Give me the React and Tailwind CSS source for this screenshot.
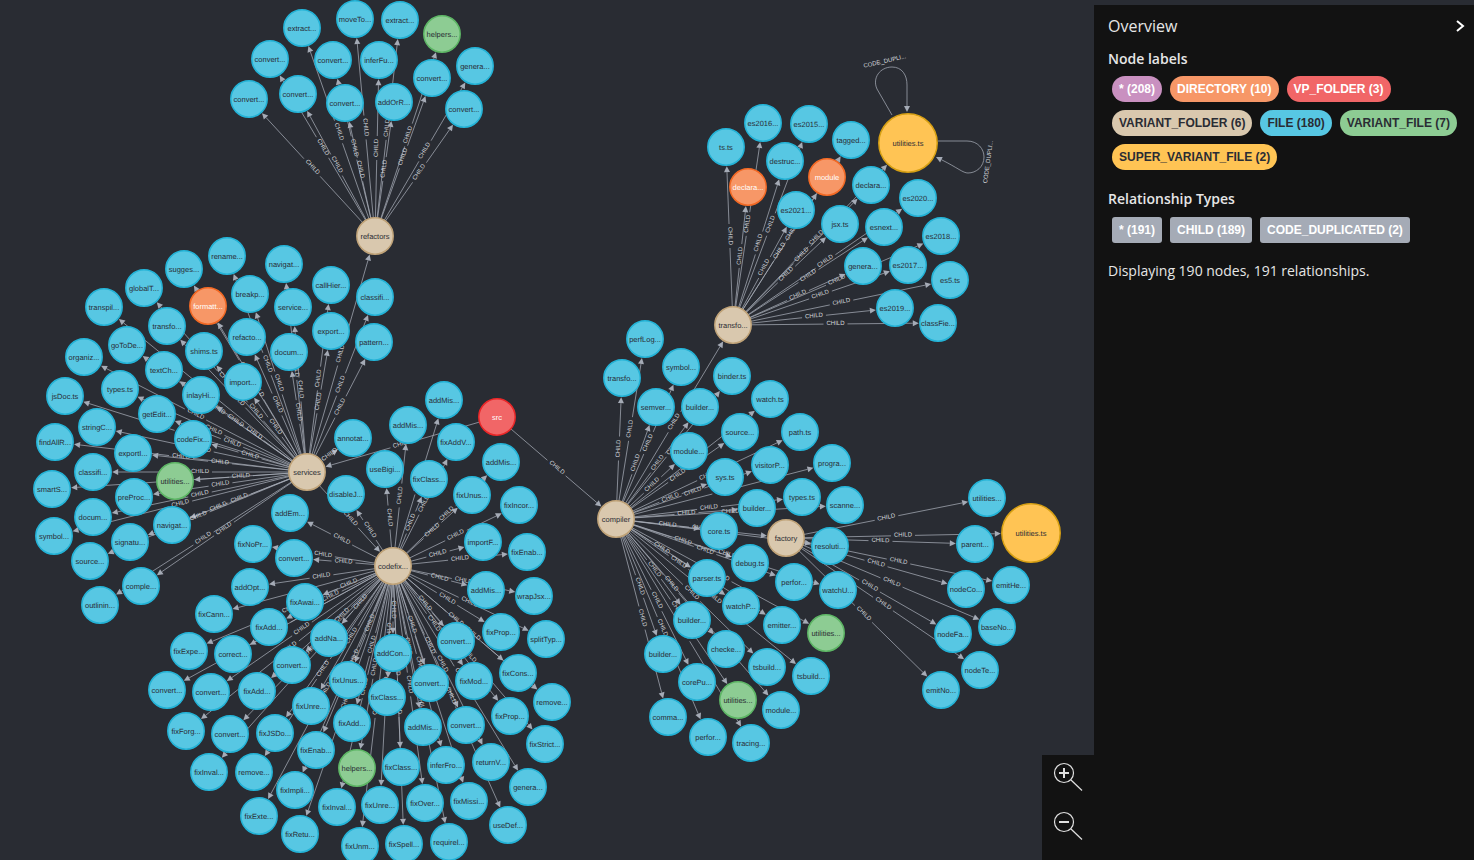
import React from 'react';

const KINDS = {
    file: { circle: 'fill-[#57c7e3] stroke-[#23b3d7]', text: 'fill-[#2a2c34]', r: 18.2 },
    variant: { circle: 'fill-[#8dcc93] stroke-[#5db665]', text: 'fill-[#2a2c34]', r: 18.2 },
    folder: { circle: 'fill-[#d9c8ae] stroke-[#c0a378]', text: 'fill-[#2a2c34]', r: 18.2 },
    dir: { circle: 'fill-[#f79767] stroke-[#f36924]', text: 'fill-white', r: 18.2 },
    vp: { circle: 'fill-[#f16667] stroke-[#eb2728]', text: 'fill-white', r: 18.2 },
    super: { circle: 'fill-[#ffc454] stroke-[#d7a013]', text: 'fill-[#2a2c34]', r: 29.2 },
};

const HUBS = {
    src: ['src', 497, 417, 'vp'],
    services: ['services', 307, 472, 'folder'],
    refactors: ['refactors', 375, 236, 'folder'],
    codefix: ['codefix...', 393, 566, 'folder'],
    compiler: ['compiler', 616, 519, 'folder'],
    transfo: ['transfo...', 733, 325, 'folder'],
    factory: ['factory', 786, 538, 'folder'],
};

const HUB_EDGES = [
    ['src', 'services'],
    ['src', 'compiler'],
    ['services', 'refactors'],
    ['services', 'codefix'],
    ['compiler', 'transfo'],
    ['compiler', 'factory'],
];

const CHILDREN = {
    refactors: [
        ['extract...', 302, 28], ['moveTo...', 355, 19], ['extract...', 400, 20], ['helpers...', 442, 34, 'variant'],
        ['convert...', 270, 59], ['convert...', 333, 60], ['inferFu...', 379, 60], ['genera...', 475, 66],
        ['convert...', 432, 78], ['convert...', 249, 99], ['convert...', 298, 94], ['convert...', 345, 103],
        ['addOrR...', 394, 102], ['convert...', 464, 109],
    ],
    services: [
        ['rename...', 227, 256], ['sugges...', 184, 269], ['navigat...', 284, 264], ['globalT...', 144, 288],
        ['callHier...', 331, 285], ['classifi...', 375, 297], ['breakp...', 250, 294], ['transpil...', 104, 307],
        ['formatt...', 208, 306, 'dir'], ['service...', 293, 307], ['transfo...', 167, 326], ['export...', 331, 331],
        ['pattern...', 374, 342], ['refacto...', 247, 337], ['goToDe...', 127, 345], ['docum...', 289, 352],
        ['shims.ts', 204, 351], ['organiz...', 84, 357], ['textCh...', 164, 370], ['import...', 243, 382],
        ['types.ts', 120, 389], ['jsDoc.ts', 65, 396], ['inlayHi...', 201, 395], ['getEdit...', 157, 414],
        ['stringC...', 97, 427], ['codeFix...', 193, 439], ['findAllR...', 55, 442], ['exportI...', 133, 453],
        ['classifi...', 93, 472], ['utilities...', 175, 481, 'variant'], ['smartS...', 52, 489], ['preProc...', 134, 497],
        ['docum...', 93, 517], ['navigat...', 172, 525], ['signatu...', 130, 542], ['symbol...', 54, 536],
        ['source...', 90, 561], ['comple...', 141, 586], ['outlinin...', 100, 605], ['annotat...', 353, 438],
    ],
    codefix: [
        ['disableJ...', 346, 494], ['addEm...', 290, 513], ['addMis...', 444, 400], ['addMis...', 408, 425],
        ['fixAddV...', 456, 442], ['useBigi...', 385, 469], ['fixClass...', 429, 479], ['addMis...', 501, 462],
        ['fixUnus...', 472, 495], ['fixIncor...', 519, 505], ['fixNoPr...', 253, 544], ['convert...', 294, 558],
        ['importF...', 483, 542], ['fixEnab...', 527, 552], ['addOpt...', 250, 587], ['fixAwai...', 305, 602],
        ['addMis...', 486, 590], ['wrapJsx...', 534, 596], ['fixCann...', 214, 614], ['fixAdd...', 269, 627],
        ['fixProp...', 501, 632], ['splitTyp...', 546, 639], ['addNa...', 329, 638], ['addCon...', 393, 653],
        ['convert...', 456, 641], ['correct...', 233, 654], ['fixExpe...', 189, 651], ['convert...', 292, 665],
        ['fixCons...', 518, 673], ['convert...', 167, 690], ['convert...', 211, 692], ['fixUnus...', 348, 680],
        ['fixMod...', 474, 681], ['convert...', 430, 683], ['remove...', 552, 702], ['fixAdd...', 257, 691],
        ['fixClass...', 387, 697], ['fixUnre...', 311, 706], ['fixProp...', 510, 716], ['fixForg...', 186, 731],
        ['convert...', 230, 734], ['fixJSDo...', 275, 733], ['fixAdd...', 352, 723], ['convert...', 466, 725],
        ['addMis...', 423, 727], ['fixStrict...', 545, 744], ['fixEnab...', 316, 750], ['returnV...', 491, 762],
        ['inferFro...', 446, 765], ['fixClass...', 401, 767], ['helpers...', 357, 768, 'variant'], ['fixInval...', 209, 772],
        ['remove...', 254, 772], ['genera...', 528, 787], ['fixImpli...', 295, 790], ['fixMissi...', 469, 801],
        ['fixOver...', 425, 803], ['fixInval...', 337, 807], ['fixUnre...', 380, 805], ['fixExte...', 259, 816],
        ['useDef...', 508, 825], ['fixRetu...', 300, 834], ['fixUnm...', 360, 846], ['fixSpell...', 404, 844],
        ['requirel...', 449, 842],
    ],
    compiler: [
        ['perfLog...', 645, 339], ['symbol...', 681, 367], ['transfo...', 622, 378], ['binder.ts', 732, 376],
        ['watch.ts', 770, 399], ['semver...', 656, 407], ['builder...', 700, 407], ['source...', 740, 432],
        ['path.ts', 800, 432], ['module...', 689, 451], ['progra...', 832, 463], ['visitorP...', 770, 465],
        ['sys.ts', 725, 477], ['types.ts', 802, 497], ['scanne...', 845, 505], ['builder...', 757, 508],
        ['core.ts', 719, 531], ['debug.ts', 750, 563], ['resoluti...', 830, 546], ['parser.ts', 707, 578],
        ['perfor...', 794, 582], ['watchU...', 838, 590], ['watchP...', 741, 606], ['emitter...', 782, 625],
        ['utilities...', 826, 633, 'variant'], ['builder...', 692, 620], ['checke...', 726, 649], ['builder...', 663, 654],
        ['tsbuild...', 767, 667], ['tsbuild...', 811, 676], ['corePu...', 697, 682], ['utilities...', 738, 700, 'variant'],
        ['module...', 781, 710], ['comma...', 668, 717], ['perfor...', 708, 737], ['tracing...', 751, 743],
    ],
    factory: [
        ['utilities...', 987, 498], ['utilities.ts', 1031, 533, 'super'], ['parent...', 975, 544], ['nodeCo...', 966, 589],
        ['emitHe...', 1011, 585], ['nodeFa...', 953, 634], ['baseNo...', 997, 627], ['nodeTe...', 980, 670],
        ['emitNo...', 941, 690],
    ],
    transfo: [
        ['ts.ts', 726, 147], ['es2016...', 763, 123], ['es2015...', 809, 124], ['tagged...', 851, 140],
        ['utilities.ts', 908, 143, 'super'], ['destruc...', 785, 161], ['declara...', 748, 187, 'dir'], ['module', 827, 177, 'dir'],
        ['declara...', 871, 185], ['es2020...', 918, 198], ['es2021...', 796, 210], ['jsx.ts', 840, 224],
        ['esnext...', 884, 227], ['es2018...', 941, 236], ['genera...', 863, 266], ['es2017...', 908, 265],
        ['es5.ts', 950, 280], ['es2019...', 895, 308], ['classFie...', 938, 323],
    ],
};

const LABELS = [
    [
        ['* (208)', 'bg-[#c990c0] text-white'],
        ['DIRECTORY (10)', 'bg-[#f79767] text-white'],
        ['VP_FOLDER (3)', 'bg-[#f16667] text-white'],
    ],
    [
        ['VARIANT_FOLDER (6)', 'bg-[#d9c8ae] text-[#2a2c34]'],
        ['FILE (180)', 'bg-[#57c7e3] text-[#2a2c34]'],
        ['VARIANT_FILE (7)', 'bg-[#8dcc93] text-[#2a2c34]'],
    ],
    [['SUPER_VARIANT_FILE (2)', 'bg-[#ffc454] text-[#2a2c34]']],
];

const RELS = ['* (191)', 'CHILD (189)', 'CODE_DUPLICATED (2)'];

const radius = (n) => KINDS[n[3] || 'file'].r;

function Edge({ from, to }) {
    const dx = to[1] - from[1];
    const dy = to[2] - from[2];
    const len = Math.hypot(dx, dy);
    const ux = dx / len;
    const uy = dy / len;
    const at = (d) => [from[1] + ux * d, from[2] + uy * d];

    const start = at(radius(from));
    const tip = at(len - radius(to) - 1);
    const base = at(len - radius(to) - 7);
    const mid = (radius(from) + len - radius(to)) / 2;
    const gapA = at(mid - 12);
    const gapB = at(mid + 12);
    const c = at(mid);

    let angle = (Math.atan2(dy, dx) * 180) / Math.PI;
    if (angle > 90) angle -= 180;
    if (angle <= -90) angle += 180;

    return (
        <g>
            <line x1={start[0]} y1={start[1]} x2={gapA[0]} y2={gapA[1]} className="stroke-[#a5abb6] stroke-[0.75]" />
            <line x1={gapB[0]} y1={gapB[1]} x2={base[0]} y2={base[1]} className="stroke-[#a5abb6] stroke-[0.75]" />
            <polygon
                points={`${tip[0]},${tip[1]} ${base[0] - uy * 3},${base[1] + ux * 3} ${base[0] + uy * 3},${base[1] - ux * 3}`}
                className="fill-[#a5abb6]"
            />
            <text
                x={c[0]}
                y={c[1]}
                transform={`rotate(${angle} ${c[0]} ${c[1]})`}
                textAnchor="middle"
                dominantBaseline="central"
                className="fill-[#d5d8dd] text-[6px]"
            >
                CHILD
            </text>
        </g>
    );
}

function Node({ node }) {
    const [label, x, y, kind = 'file'] = node;
    const style = KINDS[kind];
    return (
        <g>
            <circle cx={x} cy={y} r={style.r} className={`${style.circle} stroke-[1.5]`} />
            <text x={x} y={y} textAnchor="middle" dominantBaseline="central" className={`${style.text} text-[7.5px]`}>
                {label}
            </text>
        </g>
    );
}

function Graph() {
    const groups = Object.entries(CHILDREN);
    return (
        <svg width="1094" height="860" className="block font-['Liberation_Sans',sans-serif] [text-rendering:geometricPrecision]">
            {HUB_EDGES.map(([a, b]) => (
                <Edge key={a + b} from={HUBS[a]} to={HUBS[b]} />
            ))}
            {groups.map(([hub, kids]) =>
                kids.map((kid) => <Edge key={hub + kid[1] + kid[2]} from={HUBS[hub]} to={kid} />)
            )}

            {/* self loops on the big utilities.ts */}
            <path
                d="M892 115 L877 89 C872 78 880 67 892 67 C902 67 907 75 907 85 L907 106"
                className="fill-none stroke-[#a5abb6] stroke-[0.75]"
            />
            <polygon points="907,112 904,106 910,106" className="fill-[#a5abb6]" />
            <text x="885" y="62" transform="rotate(-13 885 62)" textAnchor="middle" dominantBaseline="central" className="fill-[#d5d8dd] text-[6px]">
                CODE_DUPLI...
            </text>
            <path
                d="M938 141 L967 141 C978 141 984 149 984 157 C984 167 976 173 968 173 C963 173 958 168 941.4 159.7"
                className="fill-none stroke-[#a5abb6] stroke-[0.75]"
            />
            <polygon points="936,157 940.1,162.4 942.7,157" className="fill-[#a5abb6]" />
            <text x="989" y="162" transform="rotate(-82 989 162)" textAnchor="middle" dominantBaseline="central" className="fill-[#d5d8dd] text-[6px]">
                CODE_DUPLI...
            </text>

            {Object.values(HUBS).map((n) => (
                <Node key={n[0]} node={n} />
            ))}
            {groups.map(([hub, kids]) => kids.map((kid) => <Node key={hub + kid[1] + kid[2]} node={kid} />))}
        </svg>
    );
}

function ZoomIcon({ plus }) {
    return (
        <svg width="32" height="32" viewBox="0 0 32 32" className="fill-none stroke-[#e0e0e0]">
            <circle cx="12" cy="12" r="9.5" strokeWidth="1.2" />
            <line x1="19" y1="19" x2="30" y2="29.5" strokeWidth="1.2" />
            <line x1="7" y1="12" x2="17" y2="12" strokeWidth="2" />
            {plus && <line x1="12" y1="7" x2="12" y2="17" strokeWidth="2" />}
        </svg>
    );
}

export default function App() {
    return (
        <div className="flex h-screen w-full overflow-hidden bg-[#292c33]">
            <main className="relative h-[860px] w-[1094px] shrink-0">
                <Graph />
                <div className="absolute bottom-0 right-0 flex h-[105px] w-[52px] flex-col gap-[17px] bg-[#121212] pl-[10px] pt-[6px]">
                    <ZoomIcon plus />
                    <ZoomIcon />
                </div>
            </main>

            <aside className="mt-[5px] flex-1 bg-[#121212] pl-[14px] font-['Open_Sans',sans-serif] text-[#e6e6e6]">
                <div className="flex h-[42px] items-center justify-between pr-[8px]">
                    <h1 className="text-base font-normal">Overview</h1>
                    <svg width="12" height="14" viewBox="0 0 12 14" className="fill-none stroke-white stroke-2">
                        <path d="M3 2 L9 7 L3 12" />
                    </svg>
                </div>
                <h2 className="mt-[2px] text-sm font-semibold leading-[20px]">Node labels</h2>
                <div className="mt-[7px] flex flex-col gap-[8px] pl-[4px] font-['Liberation_Sans',sans-serif] text-xs font-bold">
                    {LABELS.map((row, i) => (
                        <div key={i} className="flex gap-[8px]">
                            {row.map(([text, color]) => (
                                <span key={text} className={`flex h-[26px] items-center rounded-full px-[7px] ${color}`}>
                                    {text}
                                </span>
                            ))}
                        </div>
                    ))}
                </div>
                <h2 className="mt-[19px] text-sm font-semibold leading-[20px]">Relationship Types</h2>
                <div className="mt-[8px] flex gap-[8px] pl-[4px] font-['Liberation_Sans',sans-serif] text-xs font-bold text-white">
                    {RELS.map((text) => (
                        <span key={text} className="flex h-[26px] items-center rounded-[3px] bg-[#a5abb6] px-[7px]">
                            {text}
                        </span>
                    ))}
                </div>
                <p className="mt-[18px] text-sm leading-[20px]">Displaying 190 nodes, 191 relationships.</p>
            </aside>
        </div>
    );
}
